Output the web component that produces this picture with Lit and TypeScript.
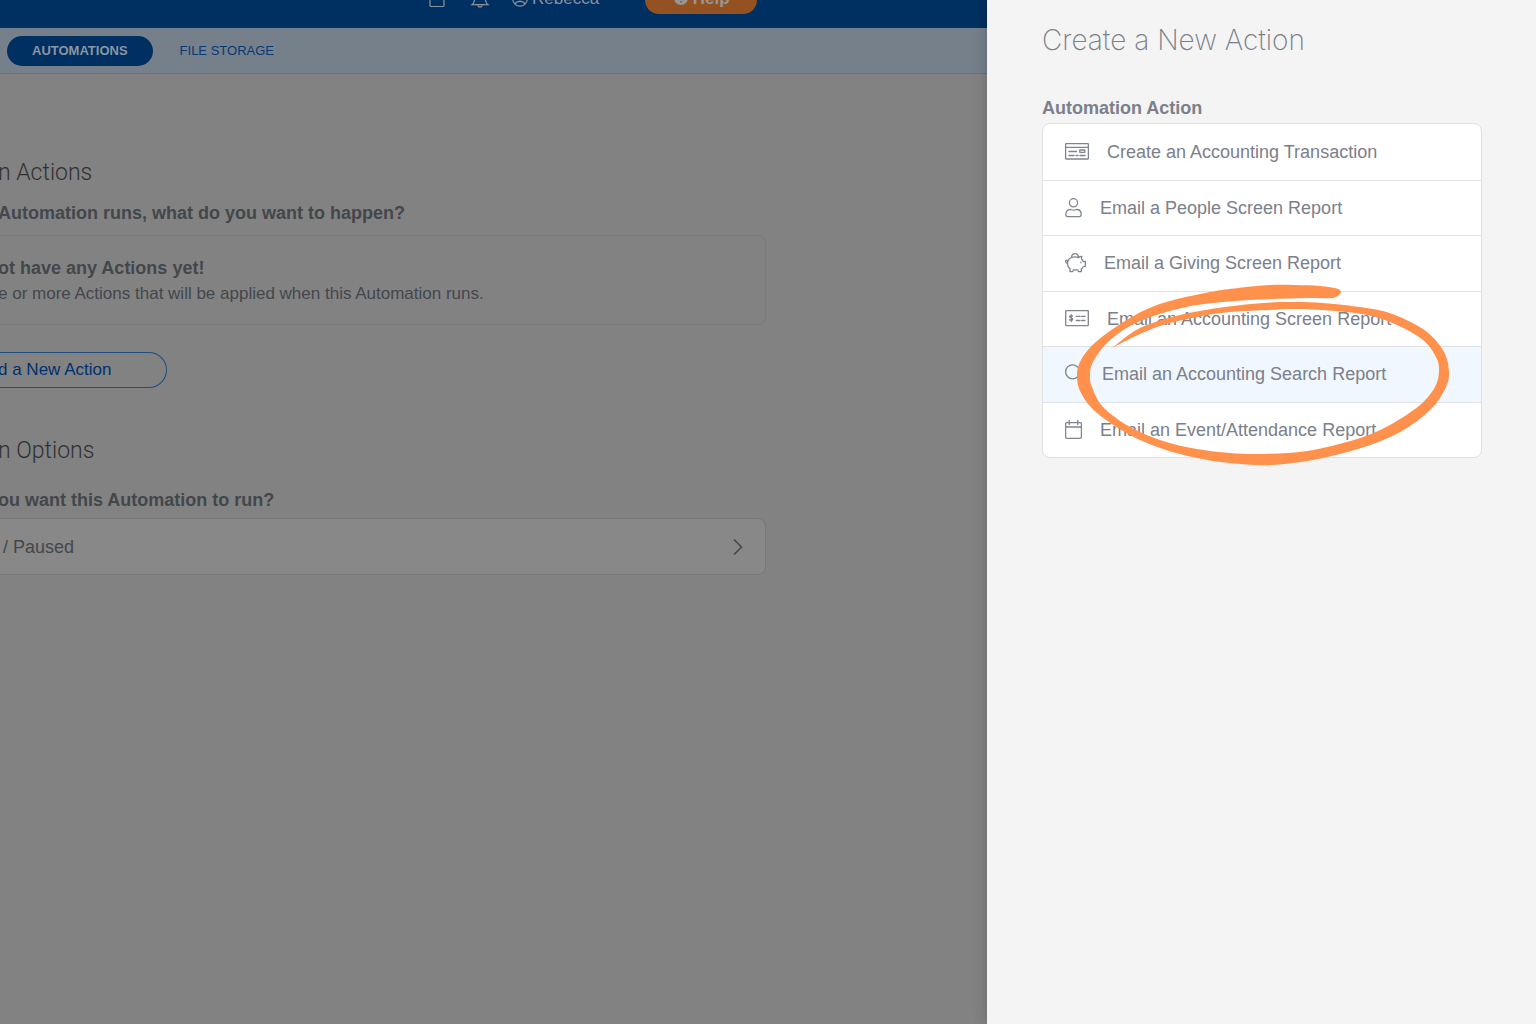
import { LitElement, html, svg, css } from "lit";
import { customElement, property } from "lit/decorators.js";
import { classMap } from "lit/directives/class-map.js";

type Point = [number, number];

/** Smooth cubic curve through the given points, without the initial move. */
function curve(points: Point[]): string {
  const parts: string[] = [];
  for (let i = 0; i < points.length - 1; i++) {
    const p0 = points[i - 1] ?? points[i];
    const p1 = points[i];
    const p2 = points[i + 1];
    const p3 = points[i + 2] ?? p2;
    const c1 = [p1[0] + (p2[0] - p0[0]) / 6, p1[1] + (p2[1] - p0[1]) / 6];
    const c2 = [p2[0] - (p3[0] - p1[0]) / 6, p2[1] - (p3[1] - p1[1]) / 6];
    parts.push(`C${c1.map((n) => n.toFixed(1))} ${c2.map((n) => n.toFixed(1))} ${p2}`);
  }
  return parts.join("");
}

/* The marker stroke: outer edge from the blunt start round to the thin tail. */
const outerEdge: Point[] = [
  [271, 13], [268, 9], [250, 6], [225, 5], [200, 5], [168, 8], [140, 12], [93, 23], [60, 38],
  [27, 61], [11, 80], [7, 96], [11, 113], [27, 133], [60, 155], [93, 169], [127, 178], [160, 183],
  [203, 185], [253, 178], [303, 164], [337, 148], [363, 127], [376, 107], [379, 92], [374, 72],
  [357, 52], [330, 37], [303, 29], [253, 23], [220, 22], [193, 23], [155, 27], [110, 35], [70, 48], [42, 68],
];
/* Inner edge from the thin tail back to the blunt start. */
const innerEdge: Point[] = [
  [42, 68], [68, 55], [93, 45], [127, 37], [160, 32], [200, 30], [220, 29], [253, 30], [297, 35],
  [327, 45], [353, 60], [366, 77], [369, 91], [365, 107], [350, 125], [320, 145], [287, 159],
  [237, 171], [193, 174], [160, 173], [127, 169], [93, 161], [60, 147], [33, 127], [22, 107],
  [20, 95], [23, 82], [37, 63], [60, 46], [93, 33], [127, 25], [165, 21], [203, 19], [240, 18],
  [263, 18], [271, 13],
];
const markerPath = `M${outerEdge[0]}${curve(outerEdge)}${curve(innerEdge)}Z`;

const icons = {
  ledger: {
    width: 24,
    shape: svg`<rect x="0.6" y="3.6" width="22.8" height="15.400" rx="0.600"/><path d="M1 7.400h22M4 11.500h7.500M4 15.500h5M11 15.500h2"/><rect x="14.800" y="10" width="5" height="2.400"/><path d="M15 15.500h5"/>`,
  },
  person: {
    width: 17,
    shape: svg`<circle cx="8.5" cy="6.800" r="4.100"/><path d="M2.600 20.600h11.800a1.800 1.800 0 0 0 1.800-1.800c0-3-1.500-5.300-4.400-5.300-1.100 0-1.500.6-3.300.6s-2.200-.6-3.300-.6C2.300 13.500.8 15.800.8 18.800a1.800 1.800 0 0 0 1.800 1.800z"/>`,
  },
  piggy: {
    width: 21,
    shape: svg`<path d="M6.400 6.300C6.800 4 8.300 2.700 10 2.700c1.800 0 3.200 1.300 3.600 3.500M6.500 6.500C8.500 5.700 12 5.800 13.800 6.600c1-1 1.900-1.300 3-1.300l-.3 2.700c.8.800 1.400 1.500 1.700 2.500h2.200v4.700l-2.400.8c-.5.900-1 1.400-1.700 2V20.600h-2.800l-.8-1.800H8.500l-.8 1.800H5v-2.800c-1.600-1.300-2.500-2.900-2.500-4.800 0-3.100 1.500-5.500 4-6.500zM2.700 12.400C.8 12.200.2 10.600 1 9.500c.8-.6 1.700 0 1.500.8M16 11.200v.6"/>`,
  },
  check: {
    width: 24,
    shape: svg`<rect x="0.700" y="3.700" width="22.600" height="15" rx="0.600"/><path d="M11.300 9.400h3.700M16.500 9.400h3.500M11.300 13.500h3.700M16.500 13.500h3.500M7.500 9C6.800 8.400 4.700 8.500 4.700 9.800c0 1.500 3 .8 3 2.400 0 1.300-2.300 1.400-3.200.5M6.200 7.600v6.800"/>`,
  },
  search: {
    width: 19,
    shape: svg`<circle cx="7.600" cy="9.800" r="7"/><path d="M12.700 14.800l5.500 5.500"/>`,
  },
  calendar: {
    width: 17,
    shape: svg`<rect x="0.600" y="4.600" width="15.800" height="15.800" rx="1.400"/><path d="M.6 9h15.800M4.200 2.500v4M12.800 2.500v4"/>`,
  },
};

interface Action {
  icon: keyof typeof icons;
  label: string;
  active?: boolean;
}

const actions: Action[] = [
  { icon: "ledger", label: "Create an Accounting Transaction" },
  { icon: "person", label: "Email a People Screen Report" },
  { icon: "piggy", label: "Email a Giving Screen Report" },
  { icon: "check", label: "Email an Accounting Screen Report" },
  { icon: "search", label: "Email an Accounting Search Report", active: true },
  { icon: "calendar", label: "Email an Event/Attendance Report" },
];

@customElement("action-list")
export class ActionList extends LitElement {
  @property({ attribute: false }) items: Action[] = [];

  static styles = css`
    :host {
      display: block;
      position: relative;
    }
    .list {
      box-sizing: border-box;
      min-height: 335px;
      margin: 0;
      padding: 0;
      display: grid;
      grid-auto-rows: 1fr;
      list-style: none;
      background: #fff;
      border: 1px solid #dfe1e3;
      border-radius: 8px;
      overflow: hidden;
    }
    .row {
      display: flex;
    }
    .row + .row {
      border-top: 1px solid #dfe3e6;
    }
    .row.active {
      background: #f0f7fe;
    }
    .choice {
      flex: 1;
      display: flex;
      align-items: center;
      gap: 18px;
      padding: 0 22px;
      border: 0;
      background: none;
      color: #7b808a;
      font: 18px/24px "Liberation Sans", Arial, sans-serif;
      text-align: left;
      cursor: pointer;
    }
    .icon {
      flex: none;
      height: 24px;
      fill: none;
      stroke: #7f848e;
      stroke-width: 1.3;
      stroke-linejoin: round;
      stroke-linecap: round;
    }
    .marker {
      position: absolute;
      left: 28px;
      top: 157px;
      width: 384px;
      height: 190px;
      fill: #ff914d;
      pointer-events: none;
    }
  `;

  render() {
    return html`
      <ul class="list">
        ${this.items.map((item) => {
          const icon = icons[item.icon];
          return html`
            <li class=${classMap({ row: true, active: !!item.active })}>
              <button class="choice" type="button">
                <svg class="icon" width=${icon.width} viewBox="0 0 ${icon.width} 24" aria-hidden="true">${icon.shape}</svg>
                <span>${item.label}</span>
              </button>
            </li>
          `;
        })}
      </ul>
      <svg class="marker" viewBox="0 0 384 190" aria-hidden="true"><path d=${markerPath} /></svg>
    `;
  }
}

@customElement("app-root")
export class AppRoot extends LitElement {
  static styles = css`
    :host {
      display: grid;
      grid-template-columns: minmax(0, 1fr) 549px;
      min-height: 100vh;
      overflow: hidden;
      font: 18px/24px "Liberation Sans", Arial, sans-serif;
      color: #43474c;
      background: #828282;
    }
    .page {
      overflow: hidden;
    }
    .topbar {
      display: flex;
      align-items: center;
      height: 56px;
      margin-top: -28px;
      padding-left: 428px;
      background: #003061;
      color: #8b939d;
    }
    .tool {
      display: flex;
      align-items: center;
      gap: 4px;
      padding: 0;
      border: 0;
      background: none;
      color: inherit;
      font: 17px/24px "Liberation Sans", Arial, sans-serif;
    }
    .tool svg {
      fill: none;
      stroke: currentColor;
      stroke-width: 1.2;
    }
    .tool + .tool {
      margin-left: 24px;
    }
    .tool.user {
      margin-left: 22px;
    }
    .name {
      padding-bottom: 2px;
    }
    .help {
      display: flex;
      align-items: center;
      justify-content: center;
      gap: 4px;
      width: 112px;
      height: 28px;
      margin-left: 46px;
      padding: 0 0 2px;
      border: 0;
      border-radius: 14px;
      background: #945222;
      color: #989694;
      font: bold 17px/24px "Liberation Sans", Arial, sans-serif;
    }
    .tabs {
      display: flex;
      align-items: center;
      gap: 2px;
      height: 45px;
      padding-left: 7px;
      background: #75808b;
      border-bottom: 1px solid #68737f;
    }
    .tab {
      padding: 0 25px;
      border-radius: 15px;
      color: #053a72;
      font-size: 13px;
      line-height: 30px;
      text-decoration: none;
    }
    .tab.current {
      background: #003061;
      color: #8a96a3;
      font-weight: bold;
    }
    .content {
      max-width: 768px;
      margin-left: -2px;
      padding-top: 83px;
    }
    .heading {
      margin: 0;
      color: #303133;
      font: 300 23px/32px Roboto, "Liberation Sans", sans-serif;
    }
    .question {
      margin: 12px 0 10px;
      font-size: 18px;
      line-height: 24px;
    }
    .notice {
      box-sizing: border-box;
      padding: 20px 0 16px;
      border: 1px solid #797a7b;
      border-left: 0;
      border-radius: 0 8px 8px 0;
    }
    .notice-title,
    .notice-text {
      margin: 0;
    }
    .notice-text {
      font-size: 17px;
      line-height: 28px;
    }
    .add {
      display: block;
      height: 36px;
      margin: 27px 0 47px;
      padding: 0 55px 0 0;
      border: 1px solid #1f4d80;
      border-left: 0;
      border-radius: 0 18px 18px 0;
      background: none;
      color: #003070;
      font: 17px/24px "Liberation Sans", Arial, sans-serif;
    }
    .question.options {
      margin: 21px 0 6px;
    }
    .select {
      display: flex;
      align-items: center;
      justify-content: space-between;
      width: 100%;
      height: 57px;
      padding: 0 21px 0 5px;
      border: 1px solid #76797b;
      border-left: 0;
      border-radius: 0 8px 8px 0;
      background: #888;
      color: #43474c;
      font: 18px/24px "Liberation Sans", Arial, sans-serif;
    }
    .chevron {
      fill: none;
      stroke: #43474c;
      stroke-width: 1.5;
    }
    .drawer {
      position: relative;
      padding: 20px 54px 20px 55px;
      background: #f4f4f4;
      box-shadow: 0 0 14px rgba(0, 0, 0, 0.2);
    }
    .title {
      margin: 0 0 36px;
      color: #7b808a;
      font: 200 28px/40px Inter, "Liberation Sans", sans-serif;
    }
    .label {
      margin: 0 0 3px;
      color: #7b808a;
      font-size: 18px;
      line-height: 24px;
    }
  `;

  render() {
    return html`
      <div class="page">
        <header class="topbar">
          <button class="tool" type="button" aria-label="Tasks">
            <svg width="18" height="18" viewBox="0 0 18 18"><rect x="2" y="2" width="14" height="13.500" rx="1" /></svg>
          </button>
          <button class="tool" type="button" aria-label="Notifications">
            <svg width="20" height="20" viewBox="0 0 20 20">
              <path d="M2 14.700h16c-1.800-1.300-2.500-3-2.700-6C15 5 13 2.500 10 2.500S5 5 4.700 8.700c-.2 3-.9 4.700-2.700 6zM7.800 15.500a2.300 2.300 0 0 0 4.400 0" />
            </svg>
          </button>
          <button class="tool user" type="button">
            <svg width="16" height="16" viewBox="0 0 16 16">
              <circle cx="8" cy="7" r="7.200" /><circle cx="8" cy="5" r="2.700" /><path d="M3 12c1.500-3.500 8.500-3.500 10 0" />
            </svg>
            <span class="name">Rebecca</span>
          </button>
          <button class="help" type="button">
            <svg width="16" height="16" viewBox="0 0 16 16" aria-hidden="true">
              <circle cx="8" cy="7" r="7" fill="#989694" />
              <path d="M5.800 5.500c0-3 4.600-2.700 4.400 0C10 7 8 7 8 8.500M8 10v1.600" fill="none" stroke="#945222" stroke-width="1.600" />
            </svg>
            <span>Help</span>
          </button>
        </header>
        <nav class="tabs">
          <a class="tab current" href="#automations">AUTOMATIONS</a>
          <a class="tab" href="#storage">FILE STORAGE</a>
        </nav>
        <main class="content">
          <h2 class="heading">n Actions</h2>
          <h3 class="question">Automation runs, what do you want to happen?</h3>
          <section class="notice">
            <h4 class="notice-title">ot have any Actions yet!</h4>
            <p class="notice-text">e or more Actions that will be applied when this Automation runs.</p>
          </section>
          <button class="add" type="button">d a New Action</button>
          <h2 class="heading">n Options</h2>
          <h3 class="question options">ou want this Automation to run?</h3>
          <button class="select" type="button">
            <span>/ Paused</span>
            <svg class="chevron" width="12" height="18" viewBox="0 0 12 18" aria-hidden="true"><path d="M2 1.500l7.500 7.500L2 16.500" /></svg>
          </button>
        </main>
      </div>
      <aside class="drawer">
        <h1 class="title">Create a New Action</h1>
        <h2 class="label">Automation Action</h2>
        <action-list .items=${actions}></action-list>
      </aside>
    `;
  }
}
